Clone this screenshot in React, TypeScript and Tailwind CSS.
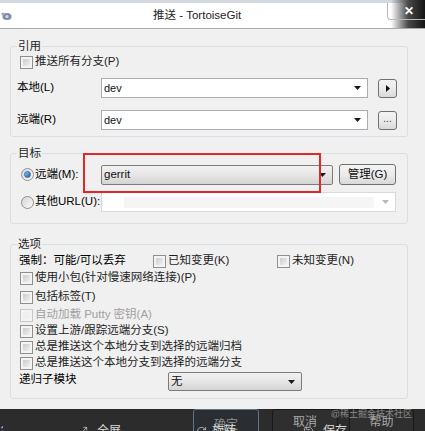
import { Maximize2, RotateCw, Save } from "lucide-react";

const font = "font-['Liberation_Sans','Noto_Sans_CJK_SC',sans-serif]";

const Arrow = ({ light }: { light?: boolean }) => (
  <svg width="7" height="4" viewBox="0 0 7 4" className="shrink-0">
    <path d="M0 0h7L3.5 4z" fill={light ? "#b8b8b8" : "#1a1a1a"} />
  </svg>
);

const CheckBox = ({ label, disabled }: { label: string; disabled?: boolean }) => (
  <div className="flex items-center h-[14px]">
    <div
      className={
        "w-[13px] h-[13px] border p-[2px] " +
        (disabled ? "border-[#c8c8c8] bg-[#f4f4f4]" : "border-[#8e8f8f] bg-[#f4f4f4]")
      }
    >
      <div
        className={
          "w-full h-full " +
          (disabled ? "bg-[#f0f0f0]" : "bg-gradient-to-br from-[#cbcbcb] to-[#f1f1f1]")
        }
      />
    </div>
    <span className={"ml-[2px] whitespace-nowrap " + (disabled ? "text-[#a0a0a0]" : "text-[#1e1e1e]")}>
      {label}
    </span>
  </div>
);

const Radio = ({ checked }: { checked?: boolean }) => (
  <div className="w-[13px] h-[13px] rounded-full border border-[#8e8f8f] bg-gradient-to-br from-[#d6d6d6] to-[#fafafa] flex items-center justify-center">
    {checked && (
      <div className="w-[7px] h-[7px] rounded-full bg-gradient-to-br from-[#8fc6f5] to-[#1d5fa8] border border-[#2e6aa8]" />
    )}
  </div>
);

const EditCombo = ({ value, w }: { value: string; w: string }) => (
  <div className={"h-[20px] border border-[#abadb3] bg-white flex items-center pl-[2px] pr-[6px] " + w}>
    <span className="flex-1 text-[11px] text-[#111]">{value}</span>
    <Arrow />
  </div>
);

const DropCombo = ({ value, w, h }: { value: string; w: string; h: string }) => (
  <div
    className={
      "border border-[#7c7c7c] rounded-[2px] bg-gradient-to-b from-[#f2f2f2] via-[#e6e6e6] to-[#d4d4d4] flex items-center pl-[2px] pr-[6px] " +
      w +
      " " +
      h
    }
  >
    <span className="flex-1 text-[11.5px] text-[#111]">{value}</span>
    <Arrow />
  </div>
);

const Btn = ({ children, w, h }: { children: React.ReactNode; w: string; h: string }) => (
  <div
    className={
      "border border-[#707070] rounded-[3px] bg-gradient-to-b from-[#f4f4f4] via-[#ebebeb] to-[#d9d9d9] flex items-center justify-center text-[#111] " +
      w +
      " " +
      h
    }
  >
    {children}
  </div>
);

const Group = ({ title, h, children }: { title: string; h: string; children: React.ReactNode }) => (
  <fieldset className={"w-[398px] ml-[10px] border border-[#d5dfe5] rounded-[3px] pl-[6px] " + h}>
    <legend className="px-[1px] leading-[14px] text-[#1e1e1e]">{title}</legend>
    {children}
  </fieldset>
);

export default function App() {
  return (
    <div className={"w-[425px] h-[431px] overflow-hidden bg-[#f0f0f0] flex flex-col text-[11.5px] " + font}>
      {/* title bar */}
      <div className="relative h-[29px] shrink-0">
        <div className="h-[3px] bg-[#d3d8de]" />
        <div className="h-[25px] bg-white flex items-center">
          <svg width="12" height="12" viewBox="0 0 12 12" className="ml-[1px]">
            <ellipse cx="6" cy="6.5" rx="4.5" ry="3.5" fill="#7d8da6" />
            <circle cx="2" cy="4" r="1.6" fill="#9aa8bd" />
            <circle cx="6" cy="6.5" r="1.6" fill="#cfd7e3" />
          </svg>
          <span className="ml-[140px] text-[11.5px] text-[#1e1e1e] whitespace-nowrap">推送 - TortoiseGit</span>
        </div>
        <div className="h-[1px] bg-[#a9a9a9]" />
        <div className="absolute right-0 top-0 w-[34px] h-[28px] bg-gradient-to-r from-transparent via-[#4a4a4a] to-[#151515]" />
        <div className="absolute right-0 top-[3px] w-[38px] h-[17px] border-l border-b border-[#b8b8b8] rounded-bl-[4px] flex items-center justify-center pl-[4px]">
          <span className="text-white font-bold text-[12px] leading-none">✕</span>
        </div>
      </div>

      {/* 引用 */}
      <div className="mt-[10px]">
        <Group title="引用" h="h-[98px]">
          <div className="mt-[2px] ml-[3px]">
            <CheckBox label="推送所有分支(P)" />
          </div>
          <div className="mt-[9px] flex items-center h-[20px]">
            <span className="w-[84px]">本地(L)</span>
            <EditCombo value="dev" w="w-[267px]" />
            <div className="ml-[10px]">
              <Btn w="w-[19px]" h="h-[19px]">
                <svg width="4" height="7" viewBox="0 0 4 7">
                  <path d="M0 0v7l4-3.5z" fill="#111" />
                </svg>
              </Btn>
            </div>
          </div>
          <div className="mt-[12px] flex items-center h-[20px]">
            <span className="w-[84px]">远端(R)</span>
            <EditCombo value="dev" w="w-[267px]" />
            <div className="ml-[10px]">
              <Btn w="w-[19px]" h="h-[19px]">
                <span className="text-[10px] leading-none -mt-[3px] text-[#333]">...</span>
              </Btn>
            </div>
          </div>
        </Group>
      </div>

      {/* 目标 */}
      <div className="relative mt-[9px]">
        <Group title="目标" h="h-[78px]">
          <div className="mt-[4px] flex items-center h-[21px]">
            <div className="w-[84px] flex items-center pl-[4px]">
              <Radio checked />
              <span className="ml-[1px]">远端(M):</span>
            </div>
            <DropCombo value="gerrit" w="w-[232px]" h="h-[20px]" />
            <div className="ml-[6px]">
              <Btn w="w-[57px]" h="h-[21px]">
                <span className="text-[11.5px]">管理(G)</span>
              </Btn>
            </div>
          </div>
          <div className="mt-[7px] flex items-center h-[20px]">
            <div className="w-[84px] flex items-center pl-[4px]">
              <Radio />
              <span className="ml-[1px]">其他URL(U):</span>
            </div>
            <div className="w-[295px] h-[20px] border border-[#d9d9d9] bg-white flex items-center pl-[22px] pr-[6px]">
              <div className="flex-1 h-[11px] bg-[#f5f5f5]" />
              <div className="ml-[8px]">
                <Arrow light />
              </div>
            </div>
          </div>
        </Group>
        <div className="absolute left-[83px] top-[7px] w-[238px] h-[40px] border-2 border-[#e32626]" />
      </div>

      {/* 选项 */}
      <div className="mt-[13px]">
        <Group title="选项" h="h-[162px]">
          <div className="mt-[3px] flex items-center h-[14px] pl-[2px]">
            <span className="w-[134px]">强制：可能/可以丢弃</span>
            <div className="w-[124px]">
              <CheckBox label="已知变更(K)" />
            </div>
            <CheckBox label="未知变更(N)" />
          </div>
          <div className="ml-[3px]">
            <div className="mt-[3px]">
              <CheckBox label="使用小包(针对慢速网络连接)(P)" />
            </div>
            <div className="mt-[5px]">
              <CheckBox label="包括标签(T)" />
            </div>
            <div className="mt-[4px]">
              <CheckBox label="自动加载 Putty 密钥(A)" disabled />
            </div>
            <div className="mt-[2px]">
              <CheckBox label="设置上游/跟踪远端分支(S)" />
            </div>
            <div className="mt-[2px]">
              <CheckBox label="总是推送这个本地分支到选择的远端归档" />
            </div>
            <div className="mt-[2px]">
              <CheckBox label="总是推送这个本地分支到选择的远端分支" />
            </div>
          </div>
          <div className="mt-[2px] flex items-start h-[19px] pl-[2px]">
            <span className="w-[149px] leading-[14px]">递归子模块</span>
            <DropCombo value="无" w="w-[134px]" h="h-[19px]" />
          </div>
        </Group>
      </div>

      {/* viewer bar */}
      <div className="relative mt-[10px] h-[22px] shrink-0 bg-[#2c2c2c] overflow-hidden">
        <div className="flex">
          <div className="ml-[193px] w-[66px] h-[30px] border border-[#5f7389] rounded-[3px] bg-[#2a2d31] flex justify-center pt-[6px] text-[12px] text-[#8e8e8e]">
            确定
          </div>
          <div className="ml-[13px] w-[66px] h-[30px] border border-[#181818] rounded-[3px] bg-[#2f2f2f] flex justify-center pt-[3px] text-[12px] text-[#a8a8a8]">
            取消
          </div>
          <div className="ml-[11px] w-[65px] h-[30px] border border-[#181818] rounded-[3px] bg-[#2f2f2f] flex justify-center pt-[3px] text-[12px] text-[#a8a8a8]">
            帮助
          </div>
        </div>
        <div className="absolute right-[13px] top-[-1px] text-[9px] text-[#8a8a8a] whitespace-nowrap">
          @稀土掘金技术社区
        </div>
        <div className="absolute left-0 top-[13px] w-full flex items-center text-[12px] text-[#dcdcdc] whitespace-nowrap">
          <span className="ml-[0px] w-[3px] overflow-hidden">1</span>
          <Maximize2 size={11} strokeWidth={1.5} className="ml-[74px]" />
          <span className="ml-[9px]">全屏</span>
          <RotateCw size={11} strokeWidth={1.5} className="ml-[75px]" />
          <span className="ml-[5px]">旋转</span>
          <Save size={11} strokeWidth={1.5} className="ml-[67px]" />
          <span className="ml-[9px]">保存</span>
        </div>
      </div>
    </div>
  );
}
